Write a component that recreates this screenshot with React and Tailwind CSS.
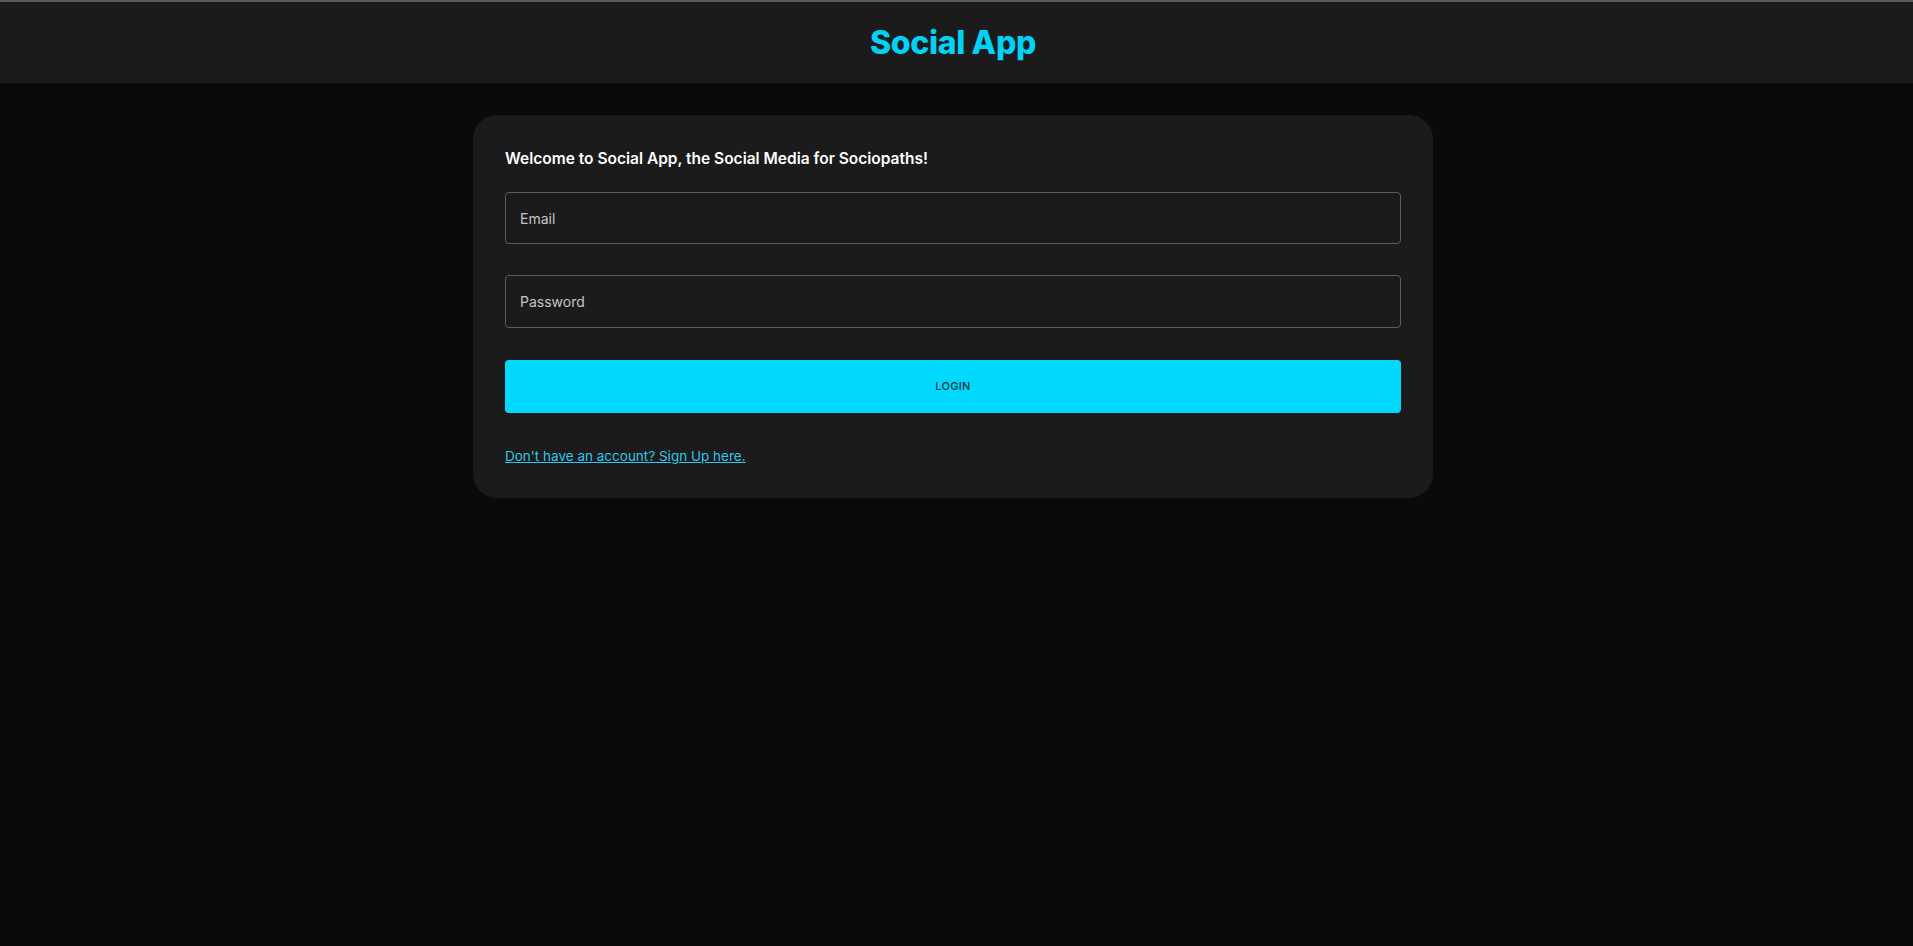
export default function App() {
  return (
    <div className="min-h-screen bg-[#0a0a0a] font-['Inter','Noto_Sans',sans-serif] text-white">
      <header className="flex h-[83px] items-center justify-center border-t-2 border-[#5a5a5a] bg-[#1b1b1b] pr-[7px]">
        <h1 className="text-[32px] font-extrabold tracking-[-0.01em] text-[#00d2f5]">Social App</h1>
      </header>

      <main className="flex justify-center pt-8 pr-[7px]">
        <form className="flex w-[960px] flex-col rounded-3xl bg-[#1b1b1b] p-8">
          <p className="text-[15.5px] leading-6 font-semibold text-white">
            Welcome to Social App, the Social Media for Sociopaths!
          </p>

          <input
            type="email"
            placeholder="Email"
            className="mt-[21px] h-[52px] rounded border border-[#5c5c5c] bg-[#1b1b1b] px-[14px] text-sm text-white outline-none placeholder:text-[#c4c4c4]"
          />
          <input
            type="password"
            placeholder="Password"
            className="mt-[31px] h-[53px] rounded border border-[#5c5c5c] bg-[#1b1b1b] px-[14px] text-sm text-white outline-none placeholder:text-[#c4c4c4]"
          />

          <button
            type="button"
            className="mt-8 h-[53px] rounded bg-[#00d8fc] text-[11px] font-medium tracking-wide text-[#10323c] uppercase"
          >
            Login
          </button>

          <a href="#" className="mt-[33px] self-start text-[13.5px] leading-5 text-[#2ec8ec] underline">
            Don't have an account? Sign Up here.
          </a>
        </form>
      </main>
    </div>
  );
}
